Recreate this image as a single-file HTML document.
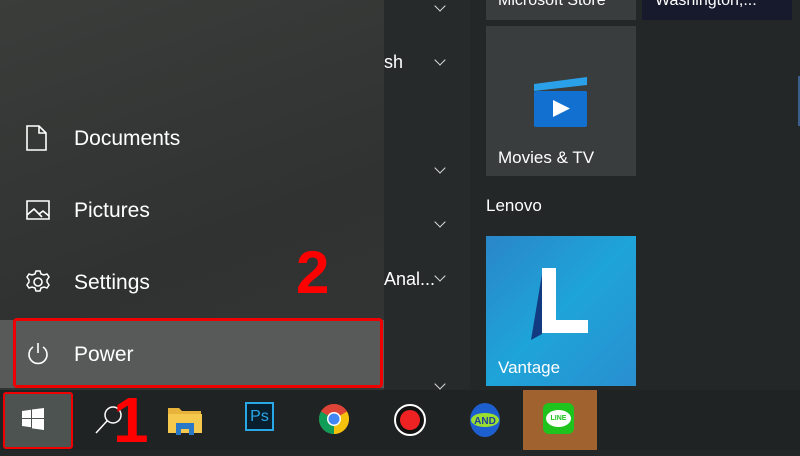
<!DOCTYPE html>
<html><head><style>
*{margin:0;padding:0;box-sizing:border-box}
body{width:800px;height:450px;overflow:hidden;background:#232727;font-family:"Liberation Sans",sans-serif;color:#fff;position:relative}
.a{position:absolute}
.lp{left:0;top:0;width:384px;height:390px;background:linear-gradient(160deg,#3b3d3b,#2f3231 60%,#333635)}
.mid{left:384px;top:0;width:86px;height:390px;background:#262a2a}
.item{left:74px;font-size:21px}
.chev{left:436px;width:8px;height:8px;border-right:1.2px solid #ddd;border-bottom:1.2px solid #ddd;transform:rotate(45deg)}
.tb{left:0;top:390px;width:800px;height:60px;background:#1f2323}
</style></head><body>
<div class="a lp"></div>
<div class="a mid"></div>
<div class="a" style="left:0;top:320px;width:384px;height:68px;background:#575a58"></div>
<div class="a" style="left:13px;top:318px;width:370px;height:70px;border:3px solid #e00;border-radius:4px"></div>
<svg class="a" style="left:26px;top:125px" width="22" height="26" viewBox="0 0 22 26"><path d="M1 1H13L20 8V25H1Z M13 1V8H20" fill="none" stroke="#fff" stroke-width="1.6"/></svg>
<div class="a item" style="top:127px">Documents</div>
<svg class="a" style="left:26px;top:200px" width="24" height="20" viewBox="0 0 24 20"><path d="M1 1H23V19H1Z M1 15L8 9L16 17 M13 14L17 11L23 16" fill="none" stroke="#fff" stroke-width="1.6"/></svg>
<div class="a item" style="top:199px">Pictures</div>
<svg class="a" style="left:25px;top:269px" width="26" height="26" viewBox="0 0 26 26"><circle cx="13" cy="13" r="4" fill="none" stroke="#fff" stroke-width="1.6"/><path d="M11 2h4l1 3 3 1 3-1 2 3-2 3v2l2 3-2 3-3-1-3 1-1 3h-4l-1-3-3-1-3 1-2-3 2-3v-2l-2-3 2-3 3 1 3-1z" fill="none" stroke="#fff" stroke-width="1.5"/></svg>
<div class="a item" style="top:271px">Settings</div>
<svg class="a" style="left:26px;top:342px" width="24" height="24" viewBox="0 0 24 24"><path d="M7 5A9 9 0 1 0 17 5 M12 1V11" fill="none" stroke="#fff" stroke-width="1.6"/></svg>
<div class="a item" style="top:343px">Power</div>
<div class="a" style="left:296px;top:238px;font-size:60px;font-weight:bold;color:#f00">2</div>
<div class="a" style="left:384px;top:52px;font-size:18px">sh</div>
<div class="a" style="left:384px;top:269px;font-size:18px">Anal...</div>
<div class="a chev" style="top:2px"></div>
<div class="a chev" style="top:56px"></div>
<div class="a chev" style="top:164px"></div>
<div class="a chev" style="top:218px"></div>
<div class="a chev" style="top:272px"></div>
<div class="a chev" style="top:380px"></div>
<div class="a" style="left:486px;top:0;width:150px;height:20px;background:#3a3d3d"></div>
<div class="a" style="left:498px;top:-8px;font-size:16px">Microsoft Store</div>
<div class="a" style="left:642px;top:0;width:150px;height:20px;background:#161a2c"></div>
<div class="a" style="left:655px;top:-8px;font-size:16px">Washington,...</div>
<div class="a" style="left:798px;top:76px;width:2px;height:50px;background:#3a5f8a"></div>
<div class="a" style="left:486px;top:26px;width:150px;height:150px;background:#3a3d3d"></div>
<svg class="a" style="left:533px;top:75px" width="56" height="54" viewBox="0 0 56 54"><path d="M1 9L54 2V10L1 16Z" fill="#2aa0e8"/><rect x="1" y="16" width="53" height="36" rx="2" fill="#1170d0"/><path d="M20 25L37 33.5L20 42Z" fill="#fff"/></svg>
<div class="a" style="left:498px;top:148px;font-size:17px">Movies &amp; TV</div>
<div class="a" style="left:486px;top:196px;font-size:17px">Lenovo</div>
<div class="a" style="left:486px;top:236px;width:150px;height:150px;background:linear-gradient(135deg,#2a86c8,#1ea4d8 50%,#2a8fd0)"></div>
<svg class="a" style="left:530px;top:266px" width="62" height="76" viewBox="0 0 62 76"><path d="M13 2L1 74L12 68Z" fill="#123a80"/><path d="M12 2H26V54H58V67H12Z" fill="#fff"/></svg>
<div class="a" style="left:498px;top:358px;font-size:17px">Vantage</div>
<div class="a tb"></div>
<div class="a" style="left:3px;top:392px;width:70px;height:57px;background:#4d5351;border:2px solid #e00;border-radius:3px"></div>
<svg class="a" style="left:22px;top:408px" width="22" height="22" viewBox="0 0 22 22"><path d="M0 3L9 1.7V10H0Z M10 1.5L22 0V10H10Z M0 11H9V19.3L0 18Z M10 11H22V22L10 20.4Z" fill="#fff"/></svg>
<svg class="a" style="left:94px;top:402px" width="30" height="36" viewBox="0 0 30 36"><circle cx="19" cy="13" r="8" fill="none" stroke="#fff" stroke-width="1.5"/><path d="M13 19L2 31" stroke="#fff" stroke-width="1.5"/></svg>
<div class="a" style="left:113px;top:388px;font-size:64px;font-weight:bold;color:#f00;line-height:1">1</div>
<svg class="a" style="left:167px;top:405px" width="36" height="32" viewBox="0 0 36 32"><path d="M1 3H12L15 6H34V28H1Z" fill="#e8b33a"/><path d="M1 9H35V28H1Z" fill="#f5c94e"/><path d="M9 18H27V30H22V24H14V30H9Z" fill="#2a78c8"/></svg>
<div class="a" style="left:245px;top:402px;width:29px;height:29px;border:2px solid #29a8e8;background:#0a1f2e;color:#29a8e8;font-size:16px;text-align:center;line-height:26px">Ps</div>
<svg class="a" style="left:317px;top:402px" width="34" height="34" viewBox="0 0 34 34"><circle cx="17" cy="17" r="15" fill="#db4437"/><path d="M17 17L4 9.5A15 15 0 0 1 30 9.5Z" fill="#db4437"/><path d="M17 17L30 9.5A15 15 0 0 1 17 32Z" fill="#f4c20d"/><path d="M17 17L17 32A15 15 0 0 1 4 9.5Z" fill="#0f9d58"/><circle cx="17" cy="17" r="7" fill="#fff"/><circle cx="17" cy="17" r="5.5" fill="#4285f4"/></svg>
<svg class="a" style="left:393px;top:403px" width="34" height="34" viewBox="0 0 34 34"><circle cx="17" cy="17" r="15" fill="#111" stroke="#fff" stroke-width="2"/><circle cx="17" cy="17" r="10" fill="#e22"/></svg>
<svg class="a" style="left:467px;top:402px" width="36" height="36" viewBox="0 0 36 36"><ellipse cx="18" cy="18" rx="15" ry="17" fill="#1e5fd0"/><ellipse cx="18" cy="18" rx="14" ry="7" fill="#9adf30"/><text x="18" y="22" font-size="10" font-weight="bold" text-anchor="middle" fill="#1e3fa0" font-family="Liberation Sans">AND</text></svg>
<div class="a" style="left:523px;top:390px;width:74px;height:60px;background:#a0622e"></div>
<div class="a" style="left:543px;top:403px;width:31px;height:31px;background:#1ec31e;border-radius:6px"></div>
<div class="a" style="left:546px;top:410px;width:25px;height:17px;background:#fff;border-radius:50%;color:#1ec31e;font-size:7px;font-weight:bold;text-align:center;line-height:17px">LINE</div>
</body></html>
